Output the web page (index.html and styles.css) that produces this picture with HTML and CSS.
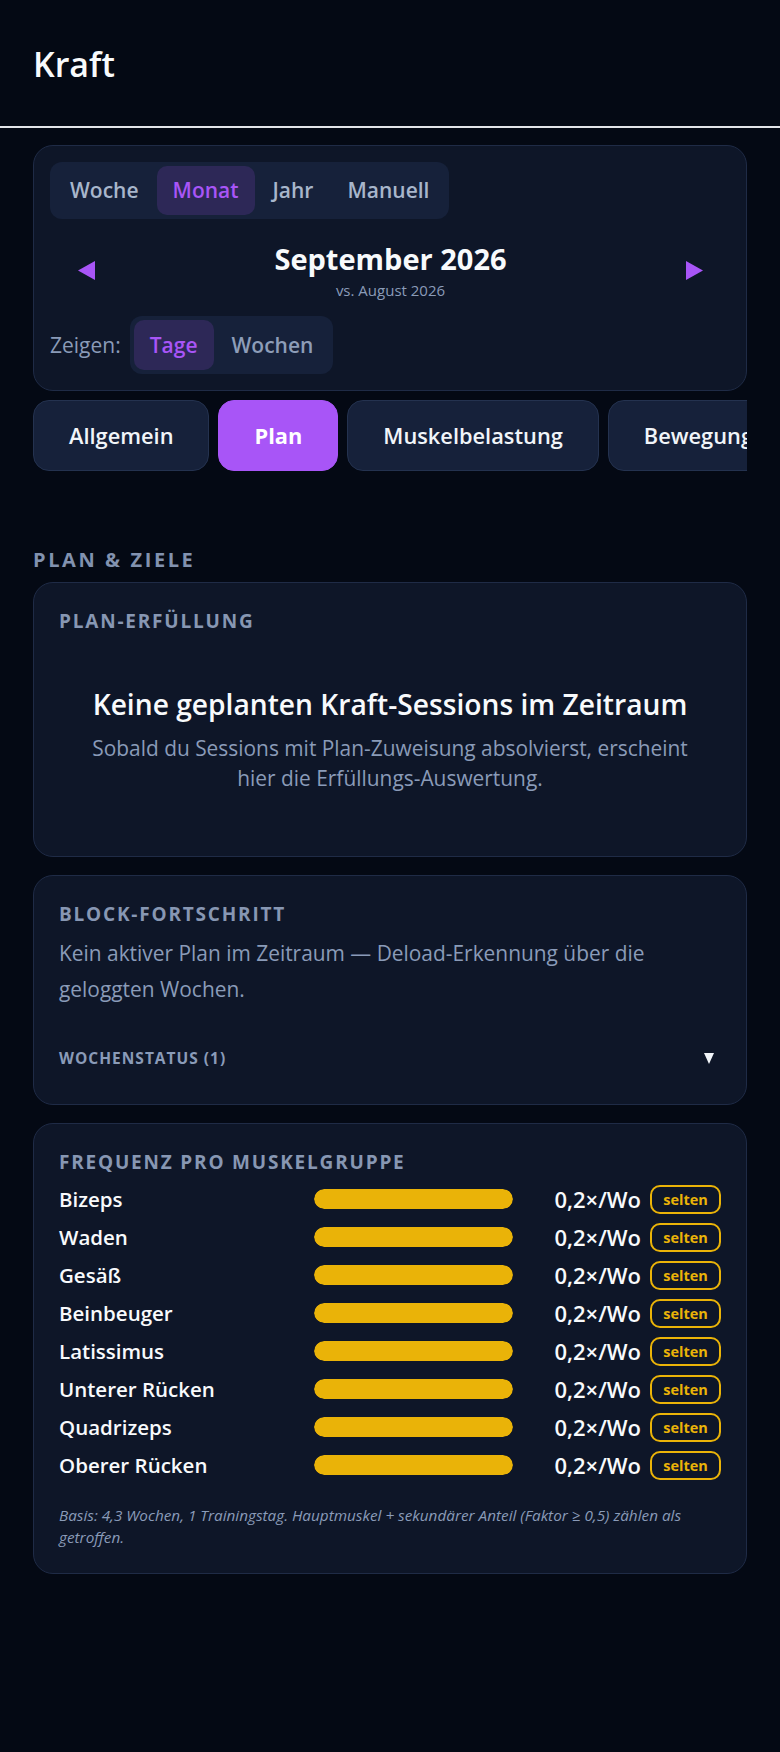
FILE: index.html
```html
<!DOCTYPE html>
<html lang="de">
<head>
<meta charset="utf-8">
<title>Kraft</title>
<link rel="stylesheet" href="styles.css">
</head>
<body>
<header class="topbar">
  <h1 class="title">Kraft</h1>
</header>
<main class="page">
  <section class="card period">
    <div class="seg">
      <button class="seg-btn">Woche</button>
      <button class="seg-btn active">Monat</button>
      <button class="seg-btn">Jahr</button>
      <button class="seg-btn">Manuell</button>
    </div>
    <div class="nav">
      <button class="arrow" aria-label="Zurück"><svg width="17" height="19" viewBox="0 0 17 19"><polygon points="17,0 17,19 0,9.5" fill="#a855f7"/></svg></button>
      <div class="nav-center">
        <div class="nav-title">September 2026</div>
        <div class="nav-sub">vs. August 2026</div>
      </div>
      <button class="arrow" aria-label="Weiter"><svg width="17" height="19" viewBox="0 0 17 19"><polygon points="0,0 0,19 17,9.5" fill="#a855f7"/></svg></button>
    </div>
    <div class="show-row">
      <span class="show-label">Zeigen:</span>
      <div class="seg seg-sm">
        <button class="seg-btn active">Tage</button>
        <button class="seg-btn">Wochen</button>
      </div>
    </div>
  </section>

  <nav class="tabs">
    <button class="tab">Allgemein</button>
    <button class="tab active">Plan</button>
    <button class="tab">Muskelbelastung</button>
    <button class="tab">Bewegungen</button>
  </nav>

  <h2 class="section-title">PLAN &amp; ZIELE</h2>

  <div class="stack">
    <section class="card panel">
      <h3 class="panel-title">PLAN-ERFÜLLUNG</h3>
      <div class="empty">
        <p class="empty-title">Keine geplanten Kraft-Sessions im Zeitraum</p>
        <p class="empty-text">Sobald du Sessions mit Plan-Zuweisung absolvierst, erscheint hier die Erfüllungs-Auswertung.</p>
      </div>
    </section>

    <section class="card panel">
      <h3 class="panel-title">BLOCK-FORTSCHRITT</h3>
      <p class="block-text">Kein aktiver Plan im Zeitraum — Deload-Erkennung über die geloggten Wochen.</p>
      <div class="details-row">
        <span class="details-label">WOCHENSTATUS (1)</span>
        <svg class="caret" width="10" height="11" viewBox="0 0 10 11"><polygon points="0,0 10,0 5,11" fill="#f1f5f9"/></svg>
      </div>
    </section>

    <section class="card panel">
      <h3 class="panel-title">FREQUENZ PRO MUSKELGRUPPE</h3>
      <div class="freq-list">
        <div class="row"><span class="row-label">Bizeps</span><div class="bar"><div class="bar-fill" style="width:100%"></div></div><span class="row-value">0,2×/Wo</span><span class="badge">selten</span></div>
        <div class="row"><span class="row-label">Waden</span><div class="bar"><div class="bar-fill" style="width:100%"></div></div><span class="row-value">0,2×/Wo</span><span class="badge">selten</span></div>
        <div class="row"><span class="row-label">Gesäß</span><div class="bar"><div class="bar-fill" style="width:100%"></div></div><span class="row-value">0,2×/Wo</span><span class="badge">selten</span></div>
        <div class="row"><span class="row-label">Beinbeuger</span><div class="bar"><div class="bar-fill" style="width:100%"></div></div><span class="row-value">0,2×/Wo</span><span class="badge">selten</span></div>
        <div class="row"><span class="row-label">Latissimus</span><div class="bar"><div class="bar-fill" style="width:100%"></div></div><span class="row-value">0,2×/Wo</span><span class="badge">selten</span></div>
        <div class="row"><span class="row-label">Unterer Rücken</span><div class="bar"><div class="bar-fill" style="width:100%"></div></div><span class="row-value">0,2×/Wo</span><span class="badge">selten</span></div>
        <div class="row"><span class="row-label">Quadrizeps</span><div class="bar"><div class="bar-fill" style="width:100%"></div></div><span class="row-value">0,2×/Wo</span><span class="badge">selten</span></div>
        <div class="row"><span class="row-label">Oberer Rücken</span><div class="bar"><div class="bar-fill" style="width:100%"></div></div><span class="row-value">0,2×/Wo</span><span class="badge">selten</span></div>
      </div>
      <p class="foot">Basis: 4,3 Wochen, 1 Trainingstag. Hauptmuskel + sekundärer Anteil (Faktor ≥ 0,5) zählen als getroffen.</p>
    </section>
  </div>
</main>
</body>
</html>
```

FILE: styles.css
```css
* { box-sizing: border-box; }

body {
  margin: 0;
  background: #040914;
  color: #f1f5f9;
  font-family: "Open Sans", "Noto Sans", sans-serif;
}

button {
  font-family: inherit;
  cursor: pointer;
}

.topbar {
  height: 128px;
  display: flex;
  align-items: center;
  padding: 3px 33px 0;
  border-bottom: 2px solid #e2e4e8;
}

.title {
  margin: 0;
  font-size: 34px;
  line-height: 41px;
  font-weight: 600;
  color: #f8fafc;
}

.page {
  padding: 17px 33px 40px;
}

.card {
  background: #0e1628;
  border: 1px solid #1f2b46;
  border-radius: 20px;
}

/* period selector */
.period {
  padding: 16px;
}

.seg {
  display: inline-flex;
  gap: 2px;
  padding: 4px;
  background: #16213a;
  border-radius: 12px;
}

.seg-btn {
  height: 49px;
  padding: 0 16px;
  border: 0;
  border-radius: 10px;
  background: transparent;
  color: #a8b6cb;
  font-size: 21px;
  line-height: 49px;
  font-weight: 600;
}

.seg-btn.active {
  background: #2d2857;
  color: #a855f7;
}

.seg-sm .seg-btn {
  height: 50px;
  line-height: 50px;
  color: #8d9db8;
}

.seg-sm .seg-btn.active {
  color: #a855f7;
}

.nav {
  display: flex;
  align-items: center;
  justify-content: space-between;
  margin-top: 22px;
  padding: 0 27px 0 28px;
}

.arrow {
  display: flex;
  padding: 0;
  border: 0;
  background: none;
}

.nav-center {
  text-align: center;
}

.nav-title {
  font-size: 29px;
  line-height: 35px;
  font-weight: 700;
  color: #f8fafc;
}

.nav-sub {
  margin-top: 4px;
  font-size: 15px;
  line-height: 20px;
  color: #8a9bb8;
}

.show-row {
  display: flex;
  align-items: center;
  gap: 9px;
  margin-top: 16px;
}

.show-label {
  font-size: 21px;
  font-weight: 500;
  color: #8a9bb8;
}

/* tabs */
.tabs {
  display: flex;
  gap: 9px;
  margin-top: 9px;
  overflow: hidden;
}

.tab {
  flex: none;
  padding: 20px 35px;
  border: 1px solid #24324f;
  border-radius: 16px;
  background: #16213a;
  color: #f1f5f9;
  font-size: 21.8px;
  line-height: 29px;
  font-weight: 600;
}

.tab.active {
  background: #a855f7;
  border-color: #a855f7;
  color: #ffffff;
  font-weight: 700;
}

.section-title {
  margin: 75px 0 8px;
  font-size: 20px;
  line-height: 28px;
  font-weight: 700;
  letter-spacing: 2.6px;
  color: #8292af;
}

.stack {
  display: flex;
  flex-direction: column;
  gap: 18px;
}

.panel {
  padding: 26px 25px 25px;
}

.panel-title {
  margin: 0;
  font-size: 19px;
  line-height: 25px;
  font-weight: 700;
  letter-spacing: 1.8px;
  color: #8797b3;
}

/* empty state */
.empty {
  text-align: center;
  padding: 52px 24px 38px;
}

.empty-title {
  margin: 0;
  font-size: 28.2px;
  line-height: 36px;
  font-weight: 600;
  color: #f8fafc;
}

.empty-text {
  margin: 11px 0 0;
  font-size: 20.9px;
  line-height: 30px;
  color: #8a9bb8;
}

/* block progress */
.block-text {
  margin: 9px 0 0;
  font-size: 20.9px;
  line-height: 35.5px;
  color: #8a9bb8;
}

.details-row {
  display: flex;
  align-items: center;
  justify-content: space-between;
  margin-top: 31px;
  padding: 10px 7px 11px 0;
}

.details-label {
  font-size: 15.5px;
  line-height: 20px;
  font-weight: 700;
  letter-spacing: 1px;
  color: #8a9bb8;
}

.caret {
  display: block;
}

/* frequency */
.freq-list {
  margin-top: 5px;
}

.row {
  display: flex;
  align-items: center;
  height: 38px;
}

.row-label {
  flex: 1;
  min-width: 0;
  font-size: 20.5px;
  font-weight: 600;
  color: #f8fafc;
}

.bar {
  width: 199px;
  height: 20px;
  border-radius: 10px;
  overflow: hidden;
}

.bar-fill {
  height: 100%;
  border-radius: 10px;
  background: #eab308;
}

.row-value {
  width: 128px;
  text-align: right;
  font-size: 22px;
  font-weight: 600;
  color: #f8fafc;
}

.badge {
  margin-left: 9px;
  width: 71px;
  height: 29px;
  display: flex;
  align-items: center;
  justify-content: center;
  border: 2px solid #eab308;
  border-radius: 10px;
  color: #eab308;
  font-size: 14.5px;
  font-weight: 700;
}

.foot {
  margin: 21px 0 0;
  font-size: 15.3px;
  line-height: 21.5px;
  font-style: italic;
  color: #8a9bb8;
}
```
